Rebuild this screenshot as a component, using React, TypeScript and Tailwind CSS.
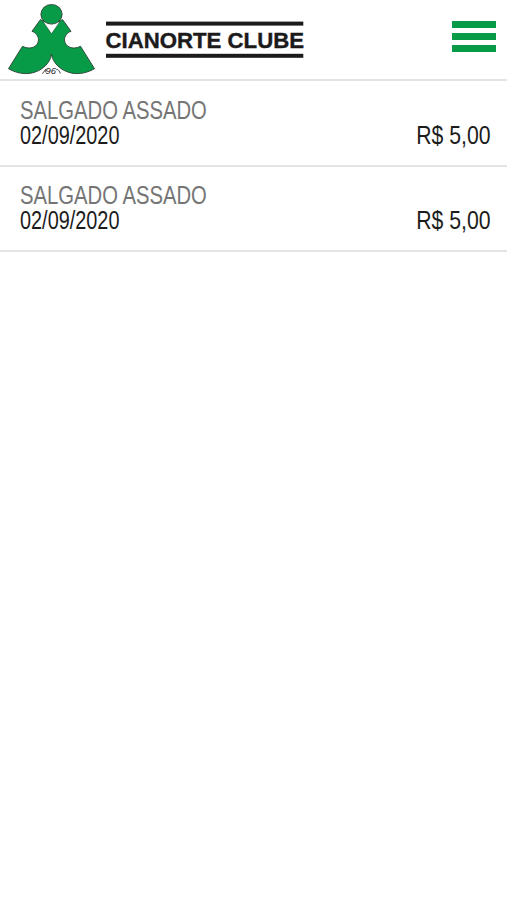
const purchases = [
  { id: 1, name: "SALGADO ASSADO", date: "02/09/2020", price: "R$ 5,00" },
  { id: 2, name: "SALGADO ASSADO", date: "02/09/2020", price: "R$ 5,00" },
];

function Logo() {
  return (
    <svg width="310" height="79" viewBox="0 0 310 79" role="img" aria-label="Cianorte Clube">
      <g fill="#079b48" stroke="#2d3f33" strokeWidth="0.9" strokeLinejoin="round">
        <path d="M40.5 19.5 L32 31.3 C35.5 32.5 38.6 36 38.5 40 C38.2 46.5 30.5 50.5 22.5 46.3 L8.5 68.7 C15 72.5 23 74.5 31 73.2 C42 71 50.5 63 51.5 54 C52.5 63 61 71 72 73.2 C80 74.5 88 72.5 94.5 68.7 L80.5 46.3 C72.5 50.5 64.8 46.5 64.5 40 C64.4 36 67.5 32.5 71 31.3 L62.5 19.5 L60 21 L51.5 33.3 L43 21 Z" />
        <path d="M44 22.6 L59 22.6 L51.5 33.3 Z" fill="#fff" stroke="none" />
        <ellipse cx="51.5" cy="14.3" rx="10.6" ry="9.8" />
      </g>
      {/* founding year tucked under the arch */}
      <text
        x="45.5"
        y="74.4"
        fill="#222"
        fontFamily="'Liberation Sans', Arial, sans-serif"
        fontSize="8.5"
        fontStyle="italic"
        textLength="10.5"
        lengthAdjust="spacingAndGlyphs"
      >
        96
      </text>
      <g fill="none" stroke="#333" strokeWidth="0.9" strokeLinecap="round">
        <path d="M42.5 73.5 L45.8 69.2 V71.8" />
        <path d="M56.3 69.8 C57.5 68.5 58.5 69.6 60.3 73.2" />
      </g>
      <g fill="#1c1a1b">
        <rect x="106" y="21.6" width="197.3" height="4" />
        <rect x="106" y="53.8" width="197.3" height="4" />
        <text
          x="105.5"
          y="48"
          fontFamily="'Liberation Sans', Arial, sans-serif"
          fontWeight="700"
          fontSize="22.6"
          stroke="#1c1a1b"
          strokeWidth="0.4"
          textLength="198.5"
          lengthAdjust="spacingAndGlyphs"
        >
          CIANORTE CLUBE
        </text>
      </g>
    </svg>
  );
}

export default function App() {
  return (
    <div className="min-h-screen bg-white font-['Liberation_Sans',Arial,sans-serif]">
      <header className="flex h-[81px] items-start justify-between border-b-2 border-[#e4e4e4] pr-[11px]">
        <Logo />
        <button aria-label="Menu" className="mt-[21px] flex flex-col gap-[5px]">
          <span className="h-[7px] w-11 bg-[#079b48]" />
          <span className="h-[7px] w-11 bg-[#079b48]" />
          <span className="h-[7px] w-11 bg-[#079b48]" />
        </button>
      </header>
      <ul>
        {purchases.map((item) => (
          <li
            key={item.id}
            className="flex h-[85.5px] items-start justify-between border-b-2 border-[#e4e4e4] pt-[16.5px] pr-4 pl-5 text-[25px] leading-[25px] whitespace-nowrap"
          >
            <div>
              <p className="origin-left scale-x-[0.81] text-[#757575]">{item.name}</p>
              <p className="origin-left scale-x-[0.795] text-[#1c1c1c]">{item.date}</p>
            </div>
            <p className="mt-[25px] origin-right scale-x-[0.85] text-[#1c1c1c]">{item.price}</p>
          </li>
        ))}
      </ul>
    </div>
  );
}
